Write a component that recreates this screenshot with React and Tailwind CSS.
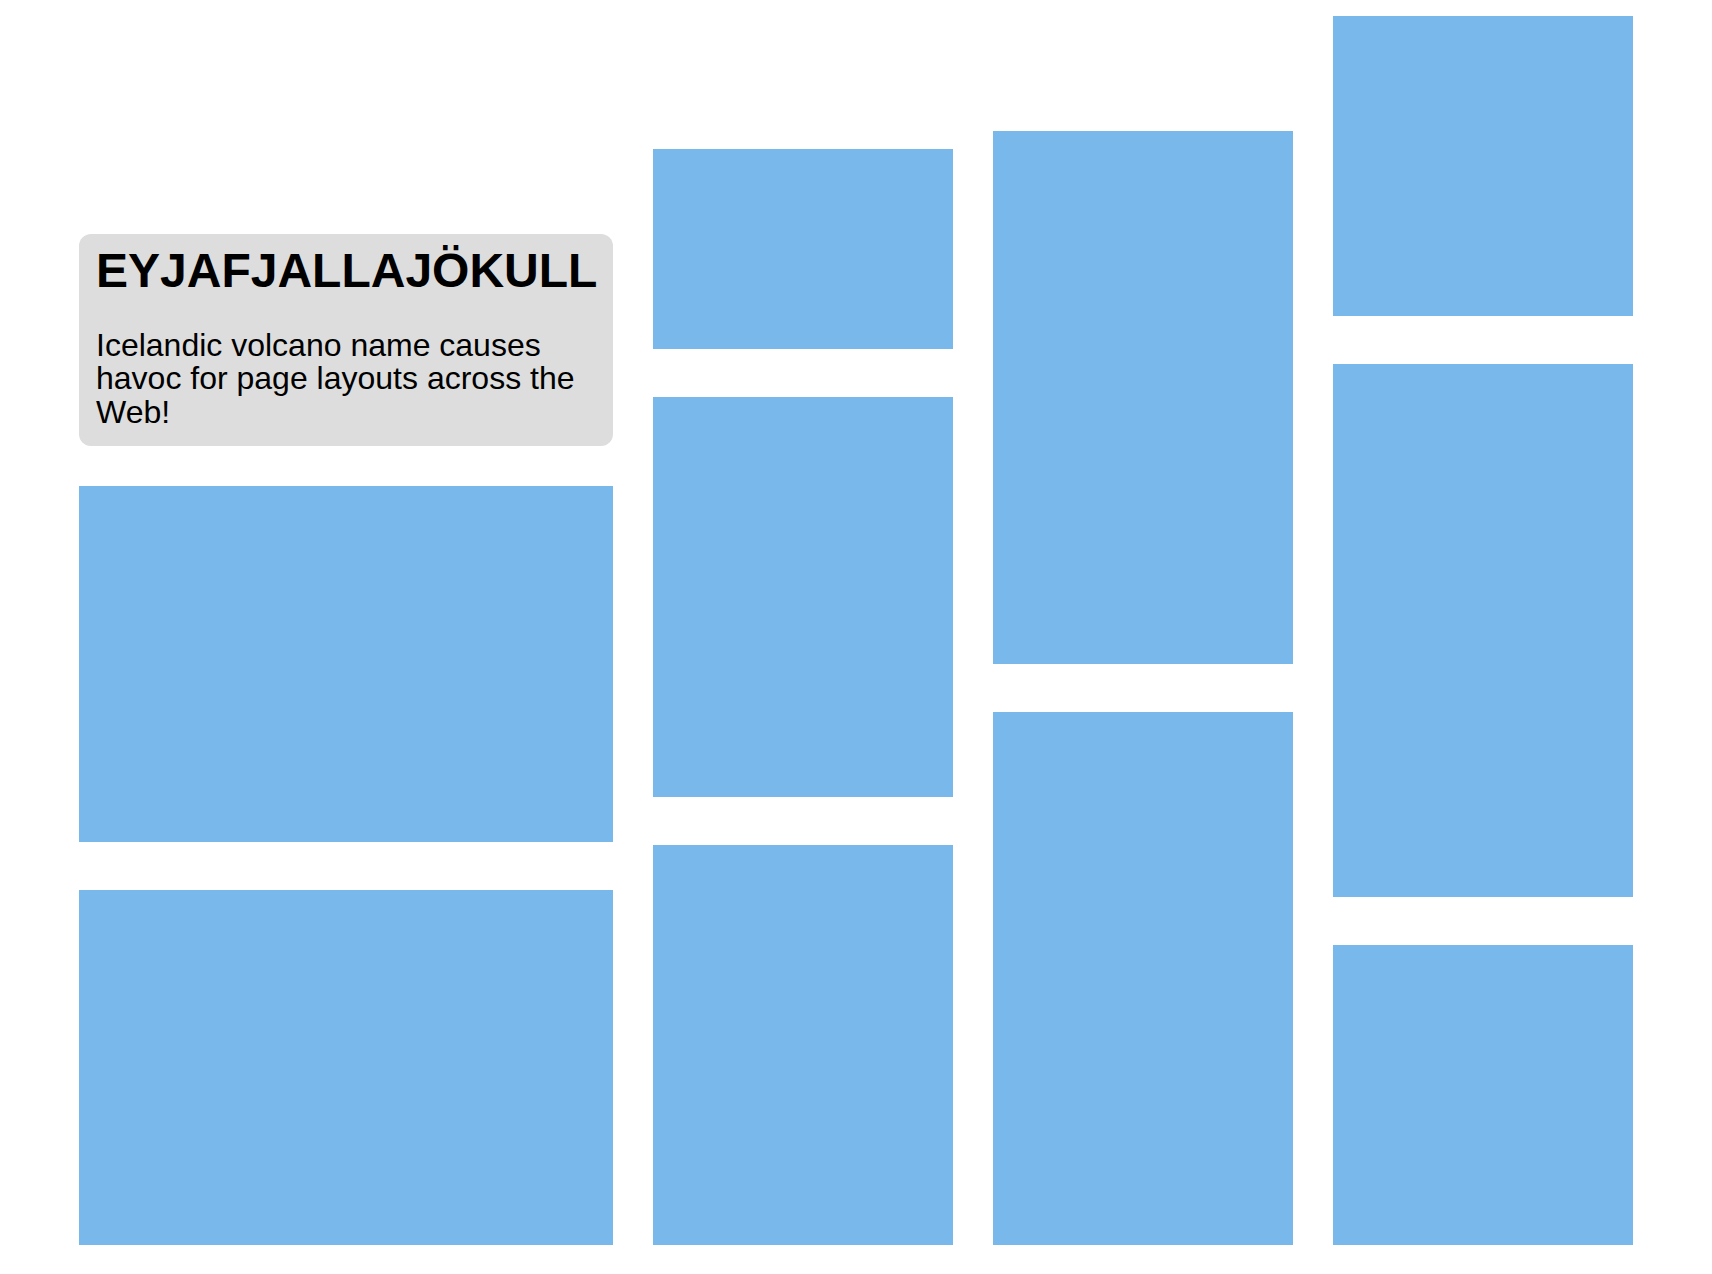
import React from "react";

// tile heights per column, in px (bottom-aligned masonry)
const columns = [
  { width: "w-[300px]", tiles: ["h-[200px]", "h-[400px]", "h-[400px]"] },
  { width: "w-[300px]", tiles: ["h-[533px]", "h-[533px]"] },
  { width: "w-[300px]", tiles: ["h-[300px]", "h-[533px]", "h-[300px]"] },
];

function Tile({ className }) {
  return <div className={`bg-[#78b8eb] ${className}`} />;
}

export default function App() {
  return (
    <div className="min-h-[1274px] bg-white font-['Liberation_Sans',Arial,sans-serif] text-black">
      <div className="flex items-end justify-center gap-10 pt-4 pb-[29px]">
        {/* first column: headline card + two wide tiles */}
        <div className="flex w-[534px] flex-col">
          <div className="h-[212px] rounded-xl bg-[#dddddd] pl-[17px] pr-4 pt-[9px]">
            <h1 className="text-[48px] font-bold leading-[55px]">EYJAFJALLAJÖKULL</h1>
            <p className="mt-[31px] text-[32px] leading-[33.4px]">
              Icelandic volcano name causes havoc for page layouts across the Web!
            </p>
          </div>
          <Tile className="mt-10 h-[356px]" />
          <Tile className="mt-12 h-[355px]" />
        </div>

        {columns.map((col, i) => (
          <div key={i} className={`flex flex-col gap-12 ${col.width}`}>
            {col.tiles.map((h, j) => (
              <Tile key={j} className={h} />
            ))}
          </div>
        ))}
      </div>
    </div>
  );
}
